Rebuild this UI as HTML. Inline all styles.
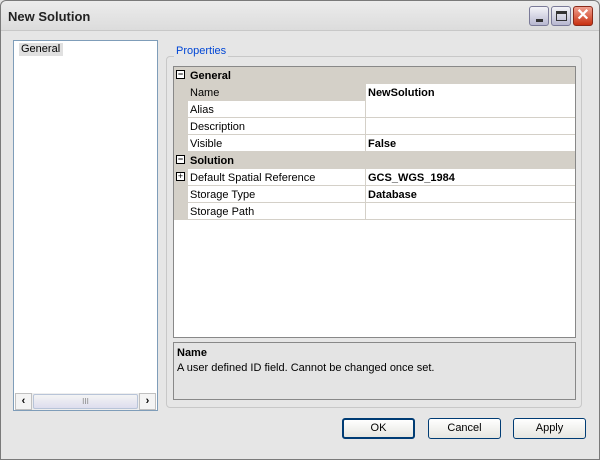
<!DOCTYPE html>
<html><head><style>
*{margin:0;padding:0;box-sizing:border-box}
body{width:600px;height:460px;background:#e4e4e4;font-family:"Liberation Sans",sans-serif;font-size:11px;position:relative;overflow:hidden}
.abs{position:absolute}
#frame{left:0;top:0;width:600px;height:460px;border:1px solid #7a7a7a;border-radius:6px 6px 0 0;background:#e6e6e6}
#title{left:1px;top:1px;width:598px;height:30px;background:linear-gradient(#ececec,#dcdcdc);border-bottom:1px solid #c8c8c8;border-radius:6px 6px 0 0}
#title span{position:absolute;left:7px;top:8px;font-weight:bold;font-size:13px;color:#222}
.tb{top:6px;width:20px;height:20px;border:1px solid #7a7a98;border-radius:3px;background:linear-gradient(#f4f4f8,#b8b8d0)}
#list{left:13px;top:40px;width:145px;height:371px;border:1px solid #7f9db9;background:#fff}
#grp{left:166px;top:56px;width:416px;height:352px;border:1px solid #c8c8c8;border-radius:4px}
#grid{left:173px;top:66px;width:403px;height:272px;border:1px solid #888;background:#fff}
.row{position:absolute;left:0;width:401px;height:17px;border-bottom:1px solid #d4d0c8}
.cat{background:#d4d0c8;font-weight:bold}
.lbl{position:absolute;left:16px;top:3px}
.val{position:absolute;left:191px;top:0;height:17px;border-left:1px solid #d4d0c8;padding:3px 0 0 2px;font-weight:bold;width:210px}
.gut{position:absolute;left:0;top:0;width:14px;height:17px;background:#d4d0c8}
.box{position:absolute;left:2px;top:3px;width:9px;height:9px;border:1px solid #000;background:#fff;font-size:9px;line-height:7px;text-align:center}
#help{left:173px;top:342px;width:403px;height:58px;border:1px solid #888;background:#e4e4e4}
.btn{top:418px;width:73px;height:21px;border:1px solid #003c74;border-radius:3px;background:linear-gradient(#fff,#e6e6e0);text-align:center;line-height:19px;font-size:11px}
</style></head><body>
<div id="frame" class="abs"></div>
<div id="title" class="abs"><span>New Solution</span></div>
<div class="abs tb" style="left:529px"><div class="abs" style="left:6px;top:12px;width:7px;height:3px;background:#333"></div></div>
<div class="abs tb" style="left:551px"><div class="abs" style="left:4px;top:4px;width:11px;height:10px;border:1px solid #333;border-top-width:3px"></div></div>
<div class="abs tb" style="left:573px;background:linear-gradient(#f0a090,#c83010);border-color:#8a2a1a;color:#fff;font-weight:bold;font-size:16px;text-align:center;line-height:18px">✕</div>
<div id="list" class="abs"><div class="abs" style="left:5px;top:2px;padding:0 3px 1px 2px;background:#e0e0e0">General</div>
<div class="abs" style="left:1px;top:352px;width:141px;height:17px;background:#eeeeee">
<div class="abs" style="left:0;top:0;width:17px;height:17px;border:1px solid #c0c0c0;background:#f4f4f4;text-align:center;font-weight:bold;line-height:14px">‹</div>
<div class="abs" style="left:18px;top:1px;width:105px;height:15px;border:1px solid #b8c4d8;border-radius:2px;background:linear-gradient(#f4f4f4,#dde);text-align:center;font-size:8px;line-height:13px;color:#888">III</div>
<div class="abs" style="left:124px;top:0;width:17px;height:17px;border:1px solid #c0c0c0;background:#f4f4f4;text-align:center;font-weight:bold;line-height:14px">›</div>
</div></div>
<div id="grp" class="abs"></div>
<div class="abs" style="left:174px;top:45px;padding:0 2px;background:#e6e6e6;color:#0046d5">Properties</div>
<div id="grid" class="abs">
<div class="row cat" style="top:0"><div class="box">−</div><span class="lbl">General</span></div>
<div class="row" style="top:17px;background:#d4d0c8"><span class="lbl">Name</span><div class="val" style="background:#fff">NewSolution</div></div>
<div class="row" style="top:34px"><div class="gut"></div><span class="lbl">Alias</span><div class="val"></div></div>
<div class="row" style="top:51px"><div class="gut"></div><span class="lbl">Description</span><div class="val"></div></div>
<div class="row" style="top:68px"><div class="gut"></div><span class="lbl">Visible</span><div class="val">False</div></div>
<div class="row cat" style="top:85px"><div class="box">−</div><span class="lbl">Solution</span></div>
<div class="row" style="top:102px"><div class="gut"></div><div class="box">+</div><span class="lbl">Default Spatial Reference</span><div class="val">GCS_WGS_1984</div></div>
<div class="row" style="top:119px"><div class="gut"></div><span class="lbl">Storage Type</span><div class="val">Database</div></div>
<div class="row" style="top:136px"><div class="gut"></div><span class="lbl">Storage Path</span><div class="val"></div></div>
</div>
<div id="help" class="abs"><div class="abs" style="left:3px;top:4px;font-weight:bold">Name</div><div class="abs" style="left:3px;top:19px">A user defined ID field. Cannot be changed once set.</div></div>
<div class="abs btn" style="left:342px;border-width:2px;line-height:17px">OK</div>
<div class="abs btn" style="left:428px">Cancel</div>
<div class="abs btn" style="left:513px">Apply</div>
</body></html>
